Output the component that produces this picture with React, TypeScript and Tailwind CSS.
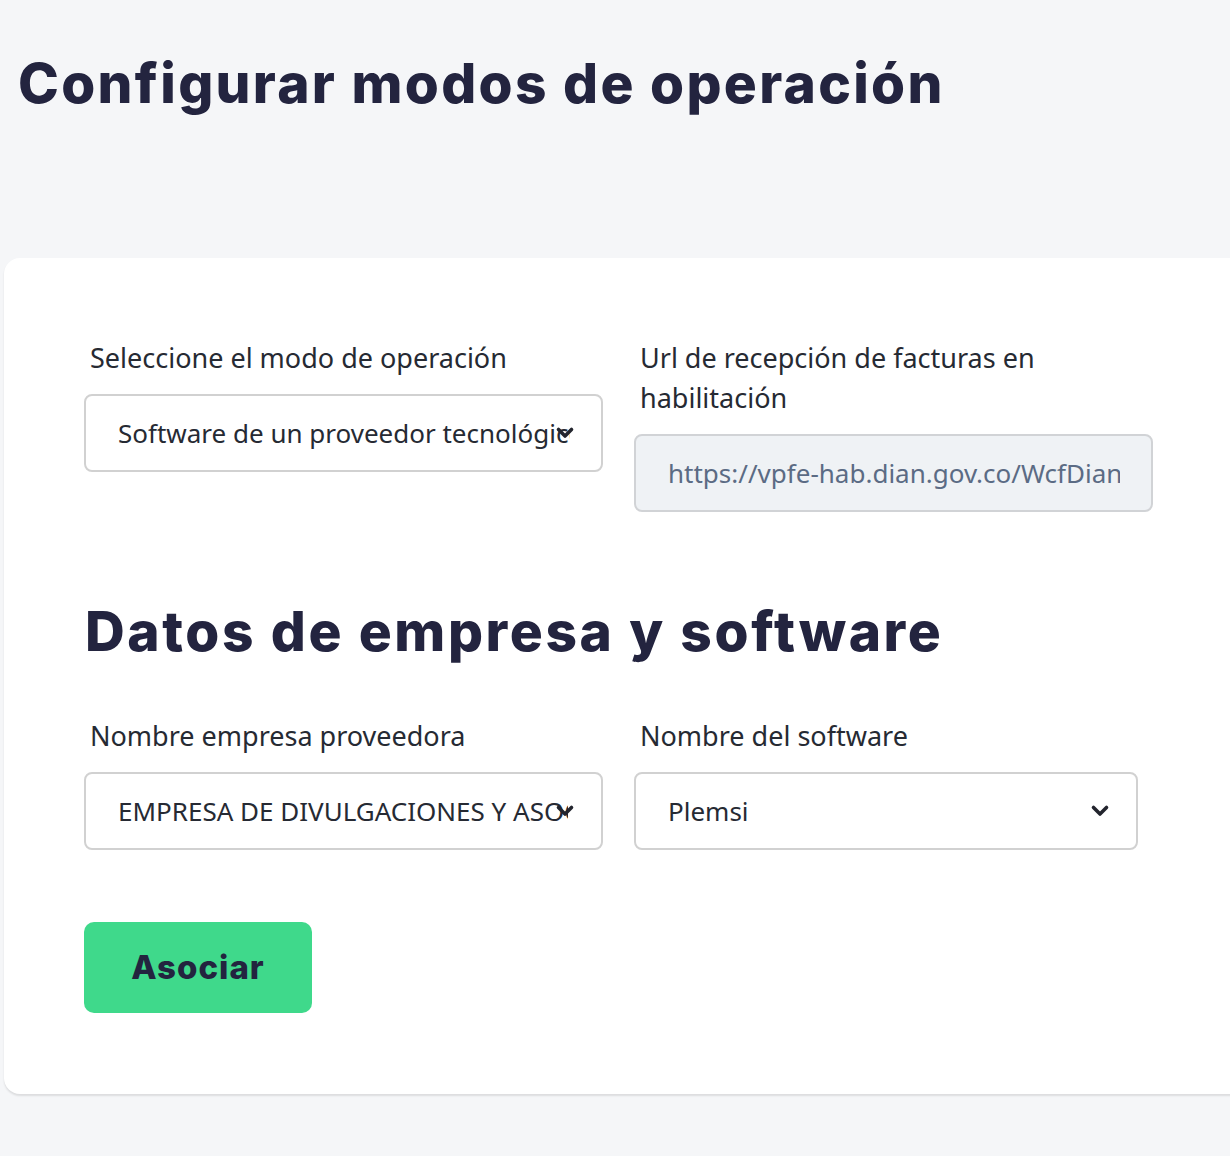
import React from "react";

const Chevron = () => (
  <svg width="20" height="14" viewBox="0 0 20 14" fill="none">
    <path d="M3.5 3.5 L10 10 L16.5 3.5" stroke="#23252e" strokeWidth="3.6" strokeLinecap="round" strokeLinejoin="round" />
  </svg>
);

function SelectBox({ value, w, textW }: { value: string; w: string; textW: string }) {
  return (
    <div className={`relative ${w} h-[78px] rounded-[8px] border-2 border-[#d1d1d1] bg-white flex items-center pl-[32px]`}>
      <div className={`${textW} overflow-hidden whitespace-nowrap text-[26px] text-[#262a33]`}>{value}</div>
      <div className="absolute right-[26px] top-1/2 -translate-y-1/2 flex">
        <Chevron />
      </div>
    </div>
  );
}

export default function App() {
  const body = { fontFamily: '"Noto Sans", "Open Sans", sans-serif' };
  const head = { fontFamily: 'Inter, "Noto Sans", sans-serif' };
  return (
    <div className="min-h-[1156px] w-[1230px] bg-[#f5f6f8] overflow-hidden" style={body}>
      <div className="pl-[18px] pt-[48px] h-[258px]">
        <h1 className="text-[55px] font-extrabold text-[#23243f] tracking-[2.3px] leading-[70px]" style={head}>
          Configurar modos de operación
        </h1>
      </div>
      <div className="ml-[4px] w-[1240px] h-[836px] bg-white rounded-l-[16px] shadow-[0_2px_2px_rgba(0,0,0,0.10)] pl-[80px] pt-[80px]">
        <div className="flex gap-[32px]">
          <div className="w-[518px] flex flex-col">
            <label className="text-[27px] leading-[40px] text-[#262a33] pl-[6px] whitespace-nowrap">Seleccione el modo de operación</label>
            <div className="mt-[16px]">
              <SelectBox value="Software de un proveedor tecnológico" w="w-[519px]" textW="w-[452px]" />
            </div>
          </div>
          <div className="w-[518px] flex flex-col">
            <label className="text-[27px] leading-[40px] text-[#262a33] pl-[6px]">
              Url de recepción de facturas en
              <br />
              habilitación
            </label>
            <div className="mt-[16px] w-[519px] h-[78px] rounded-[8px] border-2 border-[#d1d3d6] bg-[#eff2f5] flex items-center pl-[32px]">
              <div className="w-[452px] overflow-hidden whitespace-nowrap text-[26px] text-[#5b6b84]">
                https://vpfe-hab.dian.gov.co/WcfDianCustomerServices.svc
              </div>
            </div>
          </div>
        </div>

        <h2 className="mt-[84px] ml-[1px] text-[55px] font-extrabold text-[#23243f] tracking-[2.6px] leading-[70px]" style={head}>
          Datos de empresa y software
        </h2>

        <div className="mt-[50px] flex gap-[32px]">
          <div className="w-[518px] flex flex-col">
            <label className="text-[27px] leading-[40px] text-[#262a33] pl-[6px]">Nombre empresa proveedora</label>
            <div className="mt-[16px]">
              <SelectBox value="EMPRESA DE DIVULGACIONES Y ASOCIADOS" w="w-[519px]" textW="w-[450px]" />
            </div>
          </div>
          <div className="w-[503px] flex flex-col">
            <label className="text-[27px] leading-[40px] text-[#262a33] pl-[6px]">Nombre del software</label>
            <div className="mt-[16px]">
              <SelectBox value="Plemsi" w="w-[504px]" textW="w-[86px]" />
            </div>
          </div>
        </div>

        <button
          className="mt-[72px] w-[228px] h-[91px] rounded-[10px] bg-[#3fd98b] text-[33px] font-extrabold text-[#23243f] tracking-[1px] flex items-center justify-center"
          style={head}
        >
          Asociar
        </button>
      </div>
    </div>
  );
}
